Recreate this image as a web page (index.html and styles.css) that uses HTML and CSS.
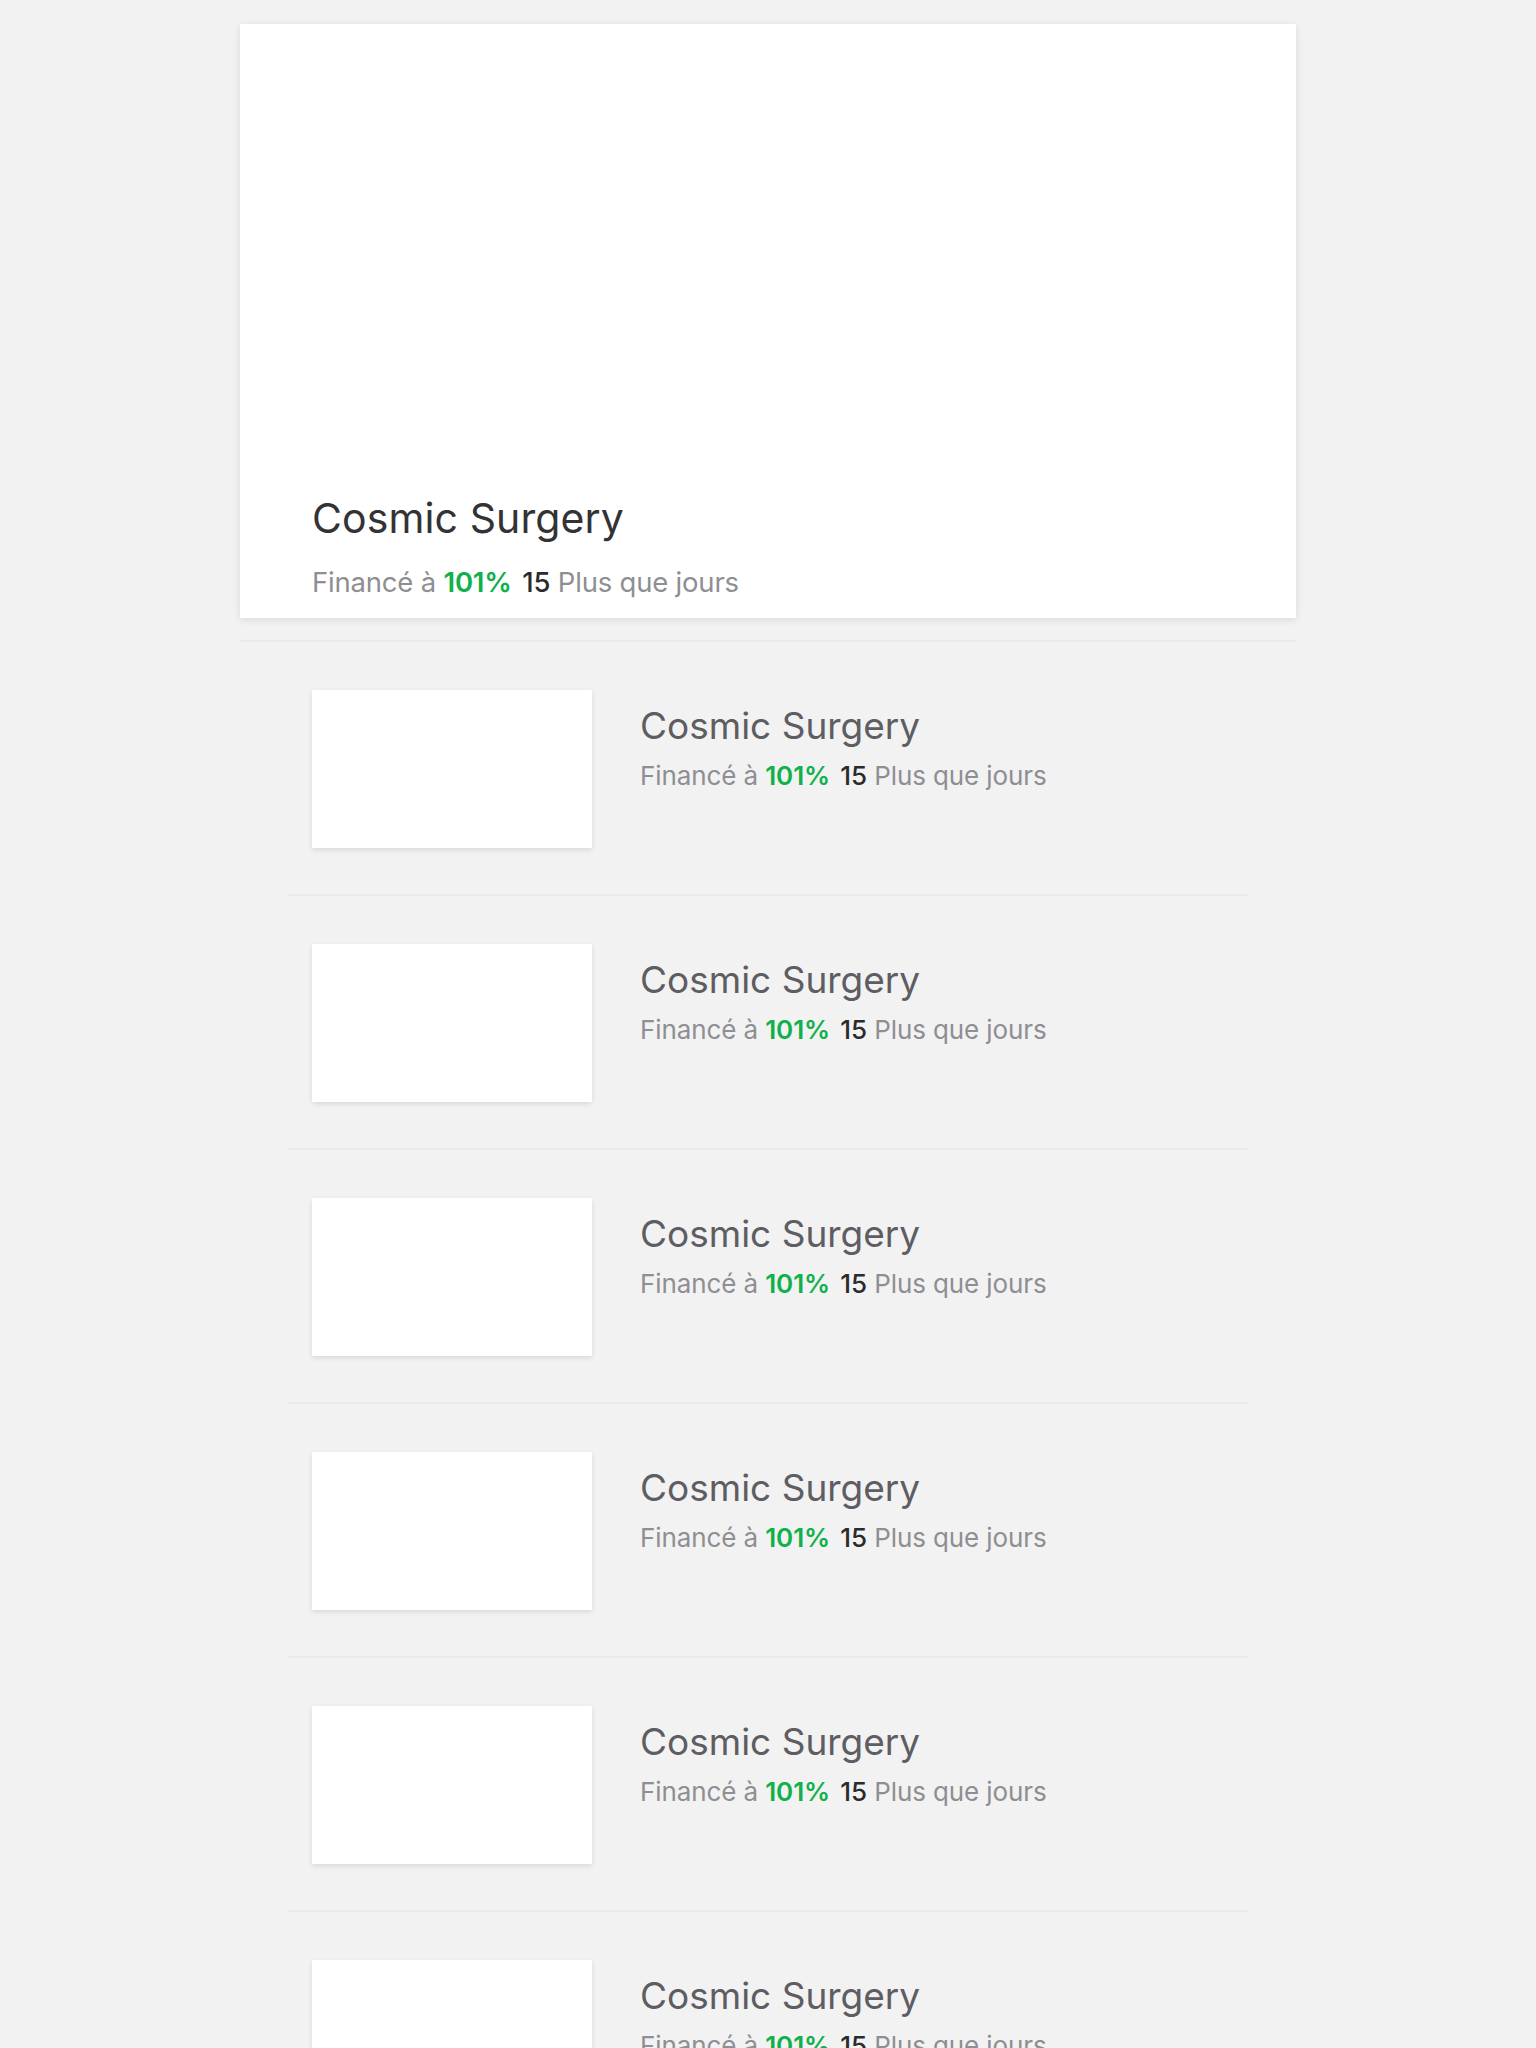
FILE: index.html
```html
<!DOCTYPE html>
<html lang="fr">
<head>
<meta charset="utf-8">
<title>Projets</title>
<link rel="stylesheet" href="styles.css">
</head>
<body>
<main class="page">
  <article class="hero">
    <div class="hero-media"></div>
    <div class="hero-body">
      <h1 class="hero-title">Cosmic Surgery</h1>
      <p class="meta meta-lg">Financé à <span class="pct">101%</span> <span class="num">15</span> Plus que jours</p>
    </div>
  </article>
  <div class="hero-sep"></div>
  <ul class="list">
    <li class="row"><div class="thumb"></div><div class="info"><h2 class="title">Cosmic Surgery</h2><p class="meta">Financé à <span class="pct">101%</span> <span class="num">15</span> Plus que jours</p></div></li>
    <li class="row"><div class="thumb"></div><div class="info"><h2 class="title">Cosmic Surgery</h2><p class="meta">Financé à <span class="pct">101%</span> <span class="num">15</span> Plus que jours</p></div></li>
    <li class="row"><div class="thumb"></div><div class="info"><h2 class="title">Cosmic Surgery</h2><p class="meta">Financé à <span class="pct">101%</span> <span class="num">15</span> Plus que jours</p></div></li>
    <li class="row"><div class="thumb"></div><div class="info"><h2 class="title">Cosmic Surgery</h2><p class="meta">Financé à <span class="pct">101%</span> <span class="num">15</span> Plus que jours</p></div></li>
    <li class="row"><div class="thumb"></div><div class="info"><h2 class="title">Cosmic Surgery</h2><p class="meta">Financé à <span class="pct">101%</span> <span class="num">15</span> Plus que jours</p></div></li>
    <li class="row"><div class="thumb"></div><div class="info"><h2 class="title">Cosmic Surgery</h2><p class="meta">Financé à <span class="pct">101%</span> <span class="num">15</span> Plus que jours</p></div></li>
  </ul>
</main>
</body>
</html>
```
FILE: styles.css
```css
* { box-sizing: border-box; }
html, body { margin: 0; padding: 0; }
body {
  background: #f2f2f2;
  font-family: Inter, "Noto Sans", "Liberation Sans", sans-serif;
  color: #333;
}
.page {
  width: 1056px;
  margin: 0 auto;
  padding-top: 24px;
}
.hero {
  background: #fff;
  box-shadow: 0 2px 8px rgba(0,0,0,0.10);
}
.hero-media { height: 469px; }
.hero-body { padding: 0 72px 19px; }
.hero-title {
  margin: 0;
  font-size: 41px;
  line-height: 50px;
  font-weight: 400;
  color: #333335;
  letter-spacing: 0.1px;
}
.meta {
  margin: 0;
  font-size: 26px;
  line-height: 32px;
  color: #8e8e93;
  white-space: nowrap;
  letter-spacing: -0.1px;
}
.meta-lg {
  margin-top: 22px;
  font-size: 27.5px;
  line-height: 34px;
  letter-spacing: -0.2px;
}
.pct { color: #0fb14a; font-weight: 600; margin-right: 3px; }
.num { color: #2b2b2b; font-weight: 500; }
.hero-sep {
  height: 2px;
  margin-top: 22px;
  background: #ebebeb;
}
.list {
  list-style: none;
  margin: 0;
  padding: 0 48px;
}
.row {
  display: flex;
  gap: 48px;
  padding: 48px 24px 46px;
  border-bottom: 2px solid #ebebeb;
}
.thumb {
  width: 280px;
  height: 158px;
  flex: none;
  background: #fff;
  box-shadow: 0 2px 5px rgba(0,0,0,0.10);
}
.info { padding-top: 14px; }
.title {
  margin: 0 0 12px;
  font-size: 37px;
  line-height: 44px;
  font-weight: 400;
  color: #5d5d62;
}
```
